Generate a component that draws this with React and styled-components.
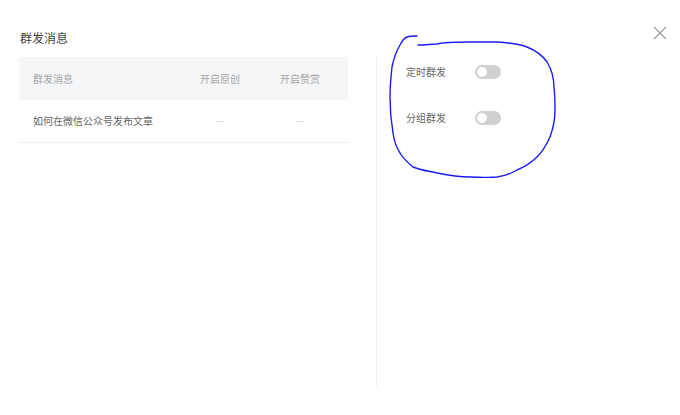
import React, { useState } from "react";
import styled, { createGlobalStyle } from "styled-components";

const GlobalStyle = createGlobalStyle`
  html, body {
    margin: 0;
    padding: 0;
    background: #fff;
  }
  body {
    font-family: "Noto Sans CJK SC", "Noto Sans", sans-serif;
  }
`;

function Toggle({ checked, onChange }) {
  return (
    <Track checked={checked} onClick={() => onChange(!checked)}>
      <Knob checked={checked} />
    </Track>
  );
}

function App() {
  const [timed, setTimed] = useState(false);
  const [grouped, setGrouped] = useState(false);
  const rows = [{ title: "如何在微信公众号发布文章" }];

  return (
    <Modal>
      <GlobalStyle />
      <Header>
        <Title>群发消息</Title>
        <CloseButton aria-label="close">
          <svg width="14" height="14" viewBox="0 0 14 14">
            <path d="M1 1L13 13M13 1L1 13" stroke="#999" strokeWidth="1.2" fill="none" />
          </svg>
        </CloseButton>
      </Header>
      <Content>
        <LeftPane>
          <TableHead>
            <Cell>群发消息</Cell>
            <Cell center>开启原创</Cell>
            <Cell center>开启赞赏</Cell>
          </TableHead>
          {rows.map((row, i) => (
            <TableRow key={i}>
              <Cell dark>{row.title}</Cell>
              <Cell center>
                <Dash />
              </Cell>
              <Cell center>
                <Dash />
              </Cell>
            </TableRow>
          ))}
        </LeftPane>
        <RightPane>
          <OptionRow>
            <OptionLabel>定时群发</OptionLabel>
            <Toggle checked={timed} onChange={setTimed} />
          </OptionRow>
          <OptionRow>
            <OptionLabel>分组群发</OptionLabel>
            <Toggle checked={grouped} onChange={setGrouped} />
          </OptionRow>
        </RightPane>
      </Content>
      <Scribble width="680" height="415" viewBox="0 0 680 415">
        <path
          d="M418,45 C425,45 432,44 437,44 C445,42 455,42 470,42 C482,42 490,42 497,42 C510,43 520,44 527,47 C537,51 543,56 547,62 C552,70 554,78 554,88 C555,95 555,103 555,110 C555,120 553,129 550,137 C546,146 542,152 537,157 C531,163 524,167 517,170 C510,174 504,176 497,177 C488,178 479,177 470,177 C458,177 447,175 437,173 C428,171 420,170 413,167 C407,162 403,158 400,153 C396,147 394,140 393,133 C391,121 390,110 390,97 C390,86 391,76 392,67 C394,57 397,50 400,45 C402,41 404,38 407,37 C410,36 414,36 417,36"
          stroke="#1b1bf5"
          strokeWidth="1.4"
          fill="none"
          strokeLinecap="round"
        />
      </Scribble>
    </Modal>
  );
}

export default App;

const Modal = styled.div`
  position: relative;
  width: 680px;
  height: 415px;
  background: #fff;
  overflow: hidden;
`;

const Header = styled.div`
  display: flex;
  justify-content: space-between;
  align-items: flex-start;
  height: 57px;
  padding: 0 12px 0 20px;
  box-sizing: border-box;
`;

const Title = styled.h2`
  margin: 29px 0 0;
  font-size: 12px;
  line-height: 17px;
  font-weight: 400;
  color: #444;
`;

const CloseButton = styled.button`
  margin-top: 25px;
  width: 16px;
  height: 16px;
  padding: 0;
  border: none;
  background: none;
  display: grid;
  place-items: center;
  cursor: pointer;
`;

const Content = styled.div`
  display: flex;
  padding-left: 19px;
  height: 329px;
`;

const LeftPane = styled.div`
  width: 329px;
  margin-right: 28px;
`;

const TableHead = styled.div`
  display: grid;
  grid-template-columns: 1fr 80px 80px;
  padding: 0 8px 0 14px;
  height: 43px;
  align-items: center;
  background: #f5f6f8;
`;

const TableRow = styled.div`
  display: grid;
  grid-template-columns: 1fr 80px 80px;
  padding: 0 8px 0 14px;
  height: 42px;
  align-items: center;
  border-bottom: 1px solid #ececec;
`;

const Cell = styled.div`
  font-size: 10px;
  line-height: 14px;
  color: ${(props) => (props.dark ? "#666" : "#a5a5a5")};
  text-align: ${(props) => (props.center ? "center" : "left")};
  display: flex;
  justify-content: ${(props) => (props.center ? "center" : "flex-start")};
  align-items: center;
`;

const Dash = styled.span`
  display: block;
  width: 8px;
  height: 1px;
  background: #e2e2e2;
`;

const RightPane = styled.div`
  border-left: 1px solid #eeeeee;
  padding: 0 0 0 29px;
  display: flex;
  flex-direction: column;
  gap: 16px;
`;

const OptionRow = styled.div`
  display: flex;
  align-items: center;
  height: 30px;
`;

const OptionLabel = styled.span`
  width: 69px;
  font-size: 10px;
  line-height: 14px;
  color: #666;
`;

const Track = styled.div`
  width: 26px;
  height: 14px;
  border-radius: 7px;
  background: ${(props) => (props.checked ? "#07c160" : "#d0d0d0")};
  position: relative;
  cursor: pointer;
`;

const Knob = styled.div`
  position: absolute;
  top: 2px;
  left: ${(props) => (props.checked ? "14px" : "2px")};
  width: 10px;
  height: 10px;
  border-radius: 50%;
  background: #fff;
`;

const Scribble = styled.svg`
  position: absolute;
  left: 0;
  top: 0;
  pointer-events: none;
`;
